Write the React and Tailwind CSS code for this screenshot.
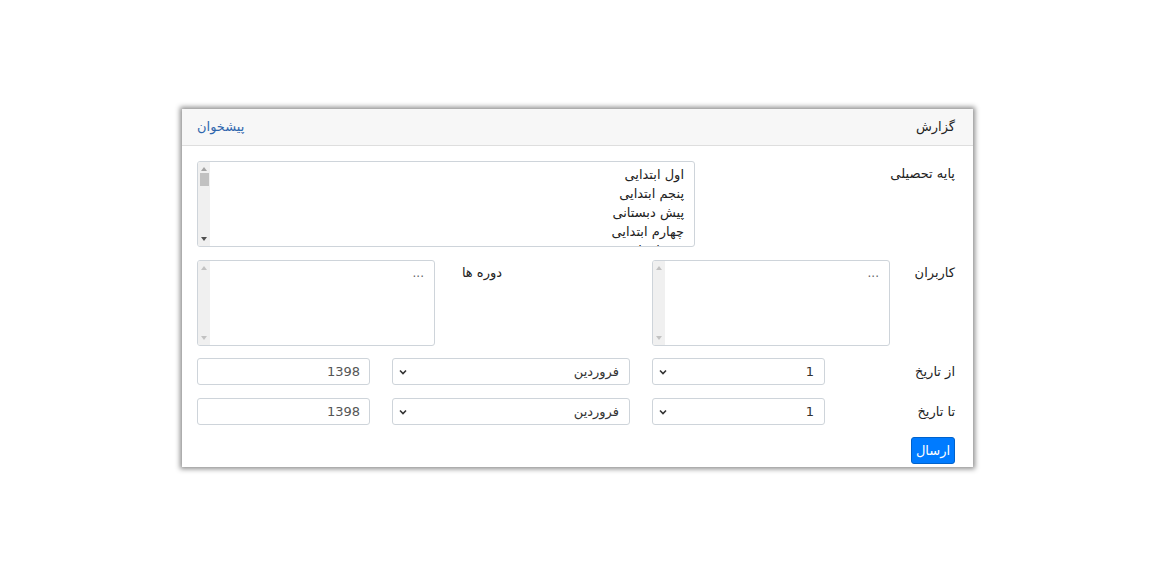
import React from 'react';

const font = { fontFamily: '"DejaVu Sans", "Liberation Sans", sans-serif' };

const Chevron = () => (
    <svg width="8" height="6" viewBox="0 0 8 6" className="shrink-0">
        <path d="M1 1.5 L4 4.5 L7 1.5" fill="none" stroke="#333" strokeWidth="1.6" />
    </svg>
);

const ScrollBar = ({ thumb, dark }) => (
    <div className="w-[12px] h-full bg-[#f0f0f0] flex flex-col items-center justify-between py-[5px] shrink-0">
        <svg width="6" height="4" viewBox="0 0 6 4">
            <path d="M0 4 L3 0 L6 4 Z" fill={dark ? '#a3a3a3' : '#c2c2c2'} />
        </svg>
        <div className="flex-1 w-full flex flex-col items-center pt-[2px]">
            {thumb && <div className="w-[9px] h-[13px] bg-[#c1c1c1]" />}
        </div>
        <svg width="6" height="4" viewBox="0 0 6 4">
            <path d="M0 0 L6 0 L3 4 Z" fill={dark ? '#505050' : '#c2c2c2'} />
        </svg>
    </div>
);

const ListBox = ({ width, items, placeholder, thumb, dark }) => (
    <div className={`${width} h-[86px] border border-[#ced4da] rounded-[3px] flex flex-row overflow-hidden`} dir="ltr">
        <ScrollBar thumb={thumb} dark={dark} />
        <div className="flex-1 overflow-hidden pr-[10px] pt-[3px] text-right" dir="rtl">
            {items && items.map((it) => (
                <div key={it} className="h-[19px] leading-[19px] text-[13px] text-[#222]">{it}</div>
            ))}
            {placeholder && <div className="text-[12px] text-[#666] leading-[14px] pt-[2px]">...</div>}
        </div>
    </div>
);

const SelectBox = ({ width, value }) => (
    <div className={`${width} h-[27px] border border-[#ced4da] rounded-[3px] flex items-center justify-between px-[6px]`}>
        <span className="text-[13px] text-[#333] pr-[4px]">{value}</span>
        <Chevron />
    </div>
);

const YearInput = () => (
    <div className="w-[173px] h-[27px] border border-[#ced4da] rounded-[3px] flex items-center px-[9px] text-[13px] text-[#555]">
        1398
    </div>
);

const DateRow = ({ label }) => (
    <div className="flex flex-row h-[27px] items-center">
        <div className="w-[133px] h-full flex items-center pr-[3px] text-[13px] text-[#222]">{label}</div>
        <SelectBox width="w-[173px]" value="1" />
        <div className="w-[22px]" />
        <SelectBox width="w-[238px]" value="فروردین" />
        <div className="w-[22px]" />
        <YearInput />
    </div>
);

export default function App() {
    return (
        <div className="w-[1156px] h-[577px] bg-white" style={font}>
            <div className="pt-[109px] pl-[182px]">
                <div
                    dir="rtl"
                    className="w-[791px] h-[358px] bg-white shadow-[0_0_5px_2px_rgba(0,0,0,0.45)] flex flex-col"
                >
                    <div className="h-[37px] bg-[#f7f7f7] border-b border-[#dedede] flex items-center justify-between pr-[18px] pl-[15px] text-[13px]">
                        <span className="text-[#222]">گزارش</span>
                        <span className="text-[#2f66ad]">پیشخوان</span>
                    </div>
                    <div className="pr-[15px] pl-[15px] pt-[15px] flex flex-col">
                        <div className="flex flex-row">
                            <div className="w-[263px] pr-[3px] text-[13px] text-[#222] pt-[3px]">پایه تحصیلی</div>
                            <ListBox
                                width="w-[498px]"
                                thumb
                                dark
                                items={['اول ابتدایی', 'پنجم ابتدایی', 'پیش دبستانی', 'چهارم ابتدایی', 'دوم ابتدایی']}
                            />
                        </div>
                        <div className="flex flex-row mt-[13px]">
                            <div className="w-[68px] pr-[3px] text-[13px] text-[#222] pt-[3px]">کاربران</div>
                            <ListBox width="w-[238px]" placeholder />
                            <div className="w-[150px]" />
                            <div className="w-[67px] text-[13px] text-[#222] pt-[3px]">دوره ها</div>
                            <ListBox width="w-[238px]" placeholder />
                        </div>
                        <div className="mt-[12px]">
                            <DateRow label="از تاریخ" />
                        </div>
                        <div className="mt-[13px]">
                            <DateRow label="تا تاریخ" />
                        </div>
                        <div className="mt-[12px] flex flex-row pr-[3px]">
                            <button className="w-[44px] h-[27px] bg-[#007bff] border border-[#0062cc] rounded-[3px] text-white text-[13px]">
                                ارسال
                            </button>
                        </div>
                    </div>
                </div>
            </div>
        </div>
    );
}
